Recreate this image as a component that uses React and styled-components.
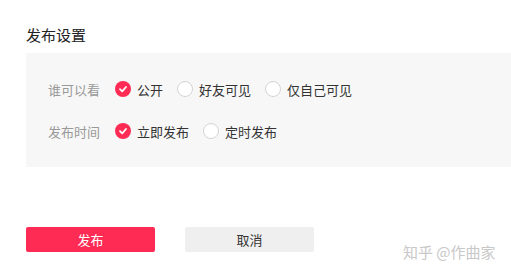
import styled, { createGlobalStyle } from "styled-components";

const GlobalStyle = createGlobalStyle`
    body {
        margin: 0;
        background: #fff;
        font-family: "Noto Sans CJK SC", "Noto Sans", sans-serif;
    }
`

const Page = styled.div`
    position: relative;
    width: 511px;
    height: 277px;
    padding: 25px 0 0 26px;
    box-sizing: border-box;
    overflow: hidden;
`

const Title = styled.h3`
    margin: 0 0 8px;
    height: 20px;
    line-height: 20px;
    font-size: 15px;
    font-weight: 400;
    color: #222;
`

const Panel = styled.div`
    display: flex;
    flex-direction: column;
    gap: 22px;
    padding: 26px 0 26px 22px;
    background: #f7f7f7;
`

const Row = styled.div`
    display: flex;
    align-items: center;
    height: 20px;
`

const Label = styled.span`
    width: 67px;
    font-size: 13px;
    color: #999;
`

const Option = styled.label`
    display: flex;
    align-items: center;
    gap: 6px;
    margin-right: 14px;
    font-size: 13px;
    color: #333;
`

const Circle = styled.span`
    display: flex;
    align-items: center;
    justify-content: center;
    width: 16px;
    height: 16px;
    box-sizing: border-box;
    border-radius: 50%;
    background: ${(p) => (p.checked ? "#fe2c55" : "#fff")};
    border: ${(p) => (p.checked ? "none" : "1px solid #d4d4d4")};
`

const Actions = styled.div`
    display: flex;
    gap: 30px;
    margin-top: 60px;
`

const Button = styled.button`
    width: 129px;
    height: 25px;
    border: none;
    border-radius: 2px;
    font-family: inherit;
    font-size: 13px;
    background: ${(p) => (p.primary ? "#fe2c55" : "#efefef")};
    color: ${(p) => (p.primary ? "#fff" : "#333")};
`

const Watermark = styled.div`
    position: absolute;
    left: 403px;
    top: 242px;
    font-size: 15px;
    line-height: 20px;
    color: #c8c8c8;
`

const Radio = ({ checked, children }) => (
    <Option>
        <Circle checked={checked}>
            {checked && (
                <svg width="10" height="10" viewBox="0 0 10 10">
                    <path d="M2 5.2 L4.2 7.3 L8 3" fill="none" stroke="#fff" strokeWidth="1.8" strokeLinecap="round" strokeLinejoin="round" />
                </svg>
            )}
        </Circle>
        {children}
    </Option>
)

const App = () => {
    return <Page>
        <GlobalStyle />
        <Title>发布设置</Title>
        <Panel>
            <Row>
                <Label>谁可以看</Label>
                <Radio checked>公开</Radio>
                <Radio>好友可见</Radio>
                <Radio>仅自己可见</Radio>
            </Row>
            <Row>
                <Label>发布时间</Label>
                <Radio checked>立即发布</Radio>
                <Radio>定时发布</Radio>
            </Row>
        </Panel>
        <Actions>
            <Button primary>发布</Button>
            <Button>取消</Button>
        </Actions>
        <Watermark>知乎 @作曲家</Watermark>
    </Page>;
};

export default App;
